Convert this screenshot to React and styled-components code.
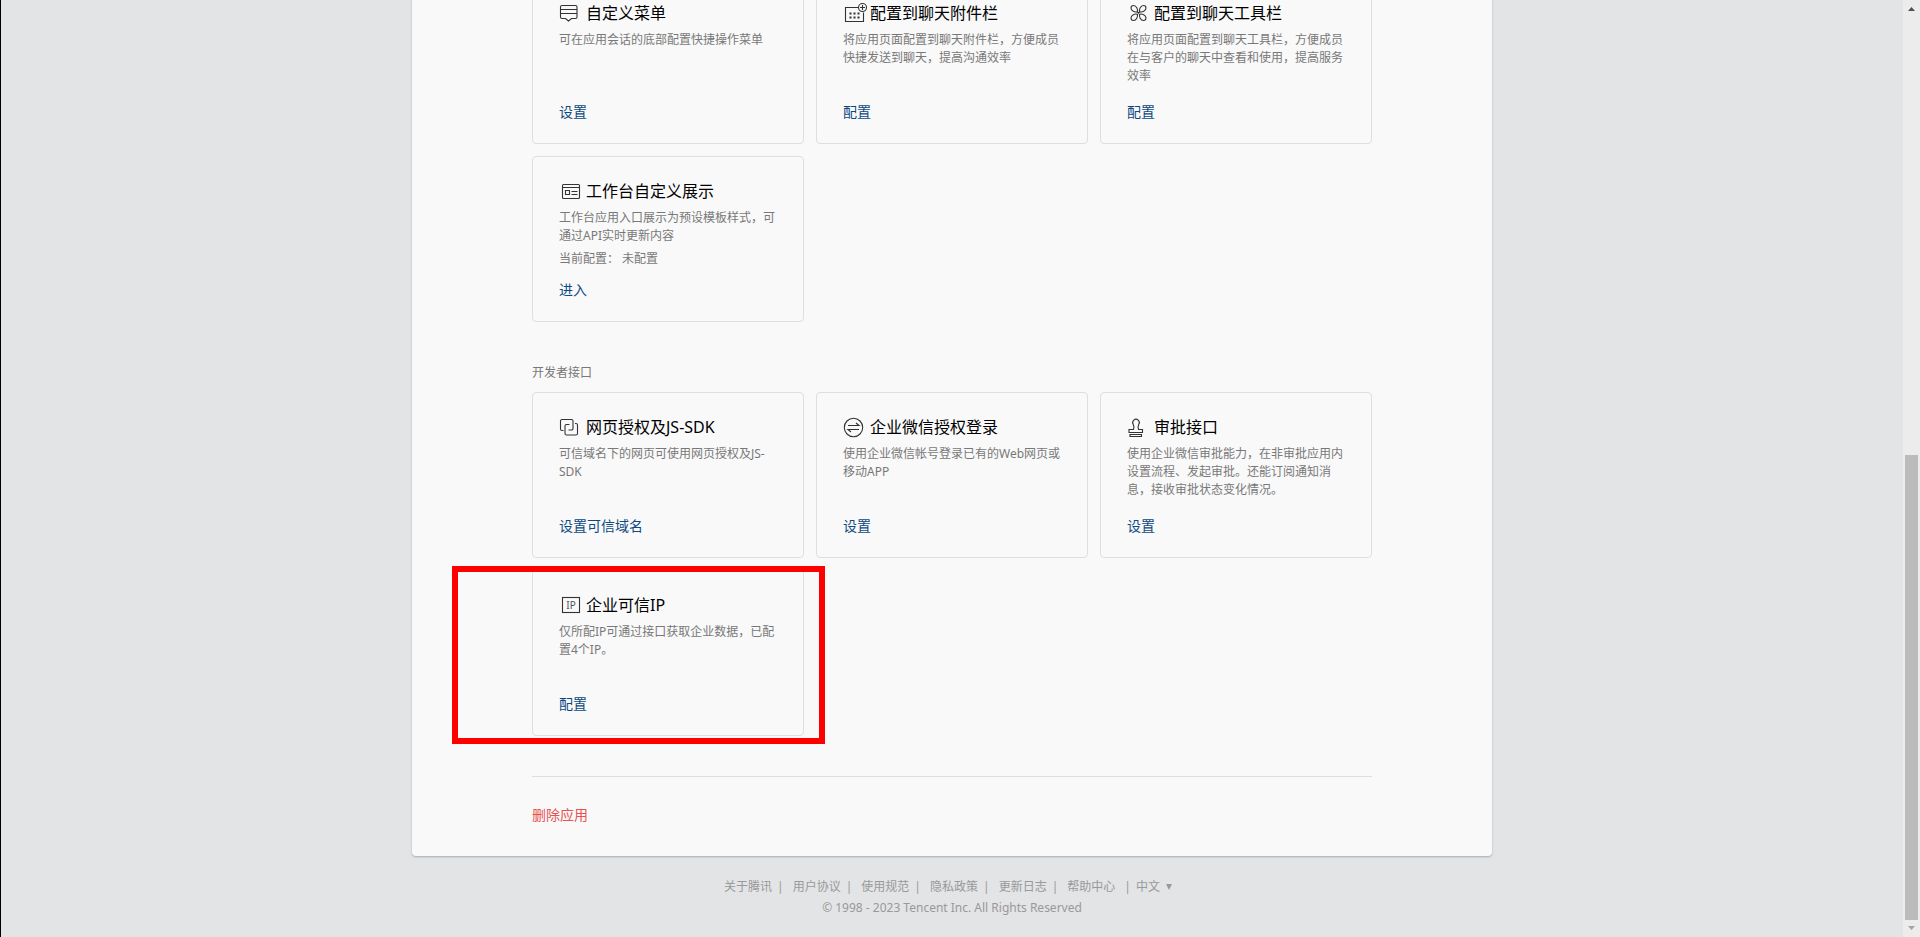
import styled, { createGlobalStyle } from 'styled-components'

const GlobalStyle = createGlobalStyle`
    * {
        box-sizing: border-box;
    }
    body {
        margin: 0;
        overflow: hidden;
        background-color: #e2e4e6;
        font-family: "Noto Sans", "Noto Sans CJK SC", sans-serif;
        font-size: 12px;
        line-height: 18px;
        color: #787878;
    }
    a {
        text-decoration: none;
    }
    button {
        padding: 0;
        border: none;
        background: none;
        font-family: inherit;
        cursor: pointer;
    }
`
const Window = styled.div`
    height: 100vh;
    display: flex;
    border-left: 1px solid #000;
`
/* the view is scrolled to its end, so the content hangs on the bottom edge */
const View = styled.div`
    flex: 1;
    min-width: 0;
    overflow: hidden;
    display: flex;
    flex-direction: column;
    justify-content: flex-end;
    align-items: center;
`
const Panel = styled.main`
    width: 100%;
    max-width: 1080px;
    flex-shrink: 0;
    padding: 30px 120px 31px;
    background-color: #f9f9f9;
    border-radius: 4px;
    box-shadow: 0 1px 2px rgba(0, 0, 0, 0.25);
`
const SectionTitle = styled.h2`
    margin: 42px 0 10px;
    font-size: 12px;
    line-height: 18px;
    font-weight: normal;
`
const Cards = styled.div`
    display: grid;
    grid-template-columns: repeat(3, 1fr);
    gap: 12px;
`
const CardBox = styled.section`
    position: relative;
    min-height: 166px;
    padding: 23px 26px 21px;
    border: 1px solid #dedfe1;
    border-radius: 4px;
    display: flex;
    flex-direction: column;
    align-items: flex-start;
`
const CardHead = styled.div`
    display: flex;
    align-items: flex-start;
    gap: 3px;
    margin-bottom: 5px;
`
const CardTitle = styled.h3`
    margin: 0;
    font-size: 16px;
    line-height: 22px;
    font-weight: normal;
    color: #000;
    white-space: nowrap;
`
const Desc = styled.p`
    margin: 0;
`
const Status = styled.p`
    margin: 5px 0 0;
    display: flex;
    gap: 3px;
`
const Action = styled.a`
    margin-top: auto;
    font-size: 14px;
    line-height: 20px;
    color: #0d4a82;
`
const Highlight = styled.div`
    position: absolute;
    top: -5px;
    right: -22px;
    bottom: -9px;
    left: -81px;
    border: 6px solid #ff0000;
    pointer-events: none;
`
const Divider = styled.hr`
    margin: 40px 0 28px;
    border: none;
    border-top: 1px solid #dddee3;
`
const DeleteButton = styled.button`
    display: block;
    font-size: 14px;
    line-height: 20px;
    color: #e8514f;
`
const FooterBox = styled.footer`
    flex-shrink: 0;
    padding: 20px 0 19px;
    line-height: 21px;
    text-align: center;
    color: #999;
`
const FooterLinks = styled.div`
    display: flex;
    justify-content: center;
    padding-right: 8px;
`
const FooterItem = styled.span`
    display: flex;
    margin-right: ${(p) => (p.$last ? 5 : 9)}px;
    gap: ${(p) => (p.$last ? 9 : 5)}px;
    a {
        color: #999;
    }
`
const LangButton = styled.button`
    display: flex;
    align-items: center;
    gap: 6px;
    font-size: 12px;
    line-height: 21px;
    color: #999;
`
const Icon = styled.svg`
    width: 24px;
    height: 24px;
    flex-shrink: 0;
    overflow: visible;
    fill: none;
    stroke: #333;
    stroke-width: 1.1;
    text {
        fill: #555;
        stroke: none;
        font-size: 10px;
        text-anchor: middle;
    }
`
const Scrollbar = styled.div`
    width: 17px;
    background-color: #ececec;
    display: flex;
    flex-direction: column;
    align-items: center;
`
const ScrollArrow = styled.svg`
    width: 17px;
    height: 17px;
    flex-shrink: 0;
    fill: ${(p) => p.$color};
`
const Track = styled.div`
    flex: 1;
    width: 13px;
    display: flex;
    align-items: flex-end;
`
const Thumb = styled.div`
    width: 100%;
    height: 51.5%;
    background-color: #bbb;
`

const MenuIcon = () => (
    <Icon viewBox="0 0 24 24">
        <path d="M3 3.5h13.5a1.5 1.5 0 0 1 1.5 1.5v10a1.5 1.5 0 0 1-1.5 1.5h-4l-3 2.5-3-2.5H3A1.5 1.5 0 0 1 1.5 15V5A1.5 1.5 0 0 1 3 3.5zM1.5 7.5H18M1.5 11.5H18"/>
    </Icon>
)

const AttachIcon = () => (
    <Icon viewBox="0 0 24 24">
        <path d="M15 5.5H2.5v14h18v-9"/>
        <circle cx="19.5" cy="5.5" r="4"/>
        <path d="M19.5 3v5M17 5.5h5"/>
        <path d="M6.5 11.5h10M6.5 15.5h10" strokeWidth="2" strokeDasharray="2 2"/>
    </Icon>
)

/* one petal, turned around the middle */
const ToolsIcon = () => (
    <Icon viewBox="0 0 24 24">
        {[0, 90, 180, 270].map((angle) => (
            <path
                key={angle}
                transform={`rotate(${angle} 11.5 11)`}
                d="M10.3 9.8C8 10.6 4 9 4 6A2.5 2.5 0 0 1 6.5 3.5C9.5 3.5 11.1 7.5 10.3 9.8z"
            />
        ))}
        <path d="M10 9.5l3 3M13 9.5l-3 3"/>
    </Icon>
)

const WorkbenchIcon = () => (
    <Icon viewBox="0 0 24 24">
        <rect x="3.5" y="4.5" width="17" height="14" rx="1"/>
        <path d="M3.5 7.5h17M6.5 10.5h4v4h-4zM12.5 11.5h6M12.5 14.5h6"/>
    </Icon>
)

const WebAuthIcon = () => (
    <Icon viewBox="0 0 24 24">
        <path d="M4.5 14.5H3A1.5 1.5 0 0 1 1.5 13V5A1.5 1.5 0 0 1 3 3.5h9.5A1.5 1.5 0 0 1 14 5v7.5a1.5 1.5 0 0 1-1.5 1.5H9.5"/>
        <path d="M16 7.5h1A1.5 1.5 0 0 1 18.5 9v8.5A1.5 1.5 0 0 1 17 19H7.5A1.5 1.5 0 0 1 6 17.5V10a1.5 1.5 0 0 1 1.5-1.5H10.5"/>
    </Icon>
)

const LoginIcon = () => (
    <Icon viewBox="0 0 24 24">
        <circle cx="10.5" cy="11.5" r="9.2"/>
        <path d="M5 9.5h11l-3-2.5M16 13.5H5l3 2.5"/>
    </Icon>
)

const StampIcon = () => (
    <Icon viewBox="0 0 24 24">
        <path d="M2 16.5v-3h4.500c1-2 .5-3.500-.2-5A3.300 3.300 0 1 1 11.700 8.500c-.7 1.500-1.200 3-.2 5h4v3zM3 18.500h11.500v2h-11.500z"/>
    </Icon>
)

const IpIcon = () => (
    <Icon viewBox="0 0 24 24">
        <rect x="3.5" y="3.5" width="17" height="15"/>
        <text x="12" y="15">IP</text>
    </Icon>
)

const Card = ({ icon, title, desc, status, action, highlight }) => (
    <CardBox>
        <CardHead>
            {icon}
            <CardTitle>{title}</CardTitle>
        </CardHead>
        <Desc>{desc}</Desc>
        {status && (
            <Status>
                <span>当前配置：</span>
                <span>{status}</span>
            </Status>
        )}
        <Action href="#">{action}</Action>
        {highlight && <Highlight/>}
    </CardBox>
)

const features = [
    { icon: <MenuIcon/>, title: '自定义菜单', desc: '可在应用会话的底部配置快捷操作菜单', action: '设置' },
    { icon: <AttachIcon/>, title: '配置到聊天附件栏', desc: '将应用页面配置到聊天附件栏，方便成员快捷发送到聊天，提高沟通效率', action: '配置' },
    { icon: <ToolsIcon/>, title: '配置到聊天工具栏', desc: '将应用页面配置到聊天工具栏，方便成员在与客户的聊天中查看和使用，提高服务效率', action: '配置' },
    { icon: <WorkbenchIcon/>, title: '工作台自定义展示', desc: '工作台应用入口展示为预设模板样式，可通过API实时更新内容', status: '未配置', action: '进入' },
]

const devFeatures = [
    { icon: <WebAuthIcon/>, title: '网页授权及JS-SDK', desc: '可信域名下的网页可使用网页授权及JS-SDK', action: '设置可信域名' },
    { icon: <LoginIcon/>, title: '企业微信授权登录', desc: '使用企业微信帐号登录已有的Web网页或移动APP', action: '设置' },
    { icon: <StampIcon/>, title: '审批接口', desc: '使用企业微信审批能力，在非审批应用内设置流程、发起审批。还能订阅通知消息，接收审批状态变化情况。', action: '设置' },
    { icon: <IpIcon/>, title: '企业可信IP', desc: '仅所配IP可通过接口获取企业数据，已配置4个IP。', action: '配置', highlight: true },
]

const footerLinks = ['关于腾讯', '用户协议', '使用规范', '隐私政策', '更新日志', '帮助中心']

const App = () => {
    return (
        <Window>
            <GlobalStyle/>
            <View>
                <Panel>
                    <Cards>
                        {features.map((item) => <Card key={item.title} {...item}/>)}
                    </Cards>
                    <SectionTitle>开发者接口</SectionTitle>
                    <Cards>
                        {devFeatures.map((item) => <Card key={item.title} {...item}/>)}
                    </Cards>
                    <Divider/>
                    <DeleteButton type="button">删除应用</DeleteButton>
                </Panel>
                <FooterBox>
                    <FooterLinks>
                        {footerLinks.map((text, i) => (
                            <FooterItem key={text} $last={i === footerLinks.length - 1}>
                                <a href="#">{text}</a>
                                <span>|</span>
                            </FooterItem>
                        ))}
                        <LangButton type="button">
                            中文
                            <svg width="6" height="6" viewBox="0 0 6 6" fill="#999">
                                <path d="M0 0h6L3 6z"/>
                            </svg>
                        </LangButton>
                    </FooterLinks>
                    <div>© 1998 - 2023 Tencent Inc. All Rights Reserved</div>
                </FooterBox>
            </View>
            <Scrollbar aria-hidden="true">
                <ScrollArrow viewBox="0 0 17 17" $color="#505050">
                    <path d="M5 11l3.5-4 3.5 4z"/>
                </ScrollArrow>
                <Track>
                    <Thumb/>
                </Track>
                <ScrollArrow viewBox="0 0 17 17" $color="#a3a3a3">
                    <path d="M5 6l3.5 4L12 6z"/>
                </ScrollArrow>
            </Scrollbar>
        </Window>
    )
}

export default App
